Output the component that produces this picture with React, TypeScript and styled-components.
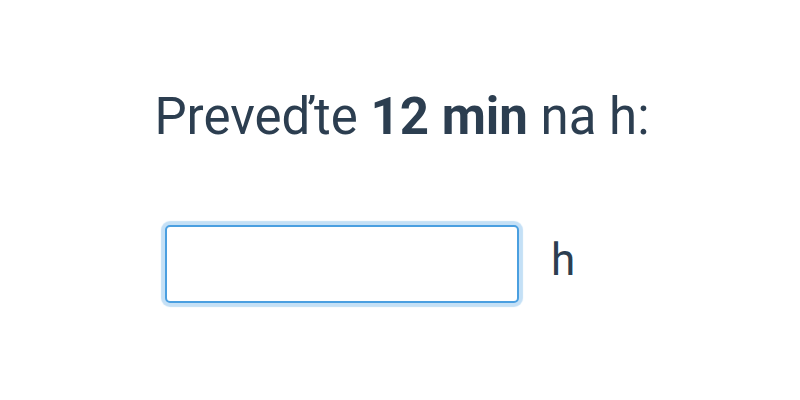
import { FunctionComponent } from 'react';
import styled, { createGlobalStyle } from 'styled-components';

const GlobalStyle = createGlobalStyle`
  html, body {
    margin: 0;
    padding: 0;
    background: #fff;
  }
  body {
    font-family: Roboto, "Noto Sans", sans-serif;
    color: #2c3e50;
  }
`;

const Container = styled.div`
  box-sizing: border-box;
  width: 800px;
  height: 400px;
  padding-top: 91px;
  display: flex;
  flex-direction: column;
  align-items: center;
`;

const Question = styled.div`
  margin-left: 4px;
  font-size: 51px;
  line-height: 51px;
  white-space: nowrap;

  b {
    font-weight: 700;
  }
`;

const AnswerRow = styled.div`
  margin-top: 83px;
  margin-right: 60px;
  display: flex;
  align-items: flex-start;
  gap: 32px;
`;

const Input = styled.input`
  box-sizing: border-box;
  width: 354px;
  height: 78px;
  border: 2px solid #4a9fe0;
  border-radius: 5px;
  box-shadow: 0 0 1px 4px #c4e0f6;
  outline: none;
  font-size: 36px;
  font-family: inherit;
  color: #2c3e50;
  padding: 0 12px;
`;

const Unit = styled.span`
  font-size: 44px;
  line-height: 70px;
`;

const App: FunctionComponent = () => {
  return (
    <>
      <GlobalStyle />
      <Container>
        <Question>
          Preveďte <b>12 min</b> na h:
        </Question>
        <AnswerRow>
          <Input type="text" />
          <Unit>h</Unit>
        </AnswerRow>
      </Container>
    </>
  );
};

export default App;
